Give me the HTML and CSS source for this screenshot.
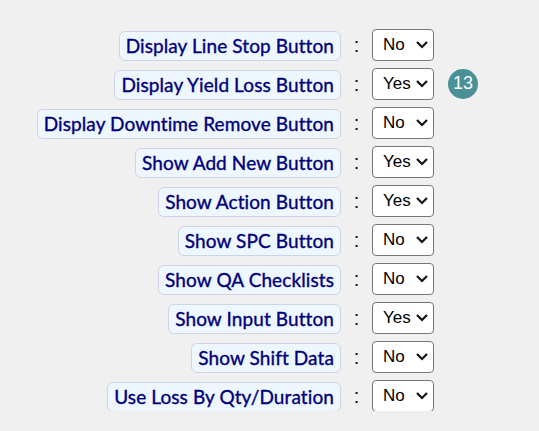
FILE: index.html
```html
<!DOCTYPE html>
<html>
<head>
<meta charset="utf-8">
<link rel="stylesheet" href="styles.css">
</head>
<body>
<div class="settings">
  <div class="row"><div class="label-cell"><span class="label">Display Line Stop Button</span></div><div class="colon">:</div><div class="sel"><select><option>No</option><option>Yes</option></select><svg class="chev" viewBox="0 0 12 7"><path d="M1 1 L6 6 L11 1"/></svg></div></div>
  <div class="row"><div class="label-cell"><span class="label">Display Yield Loss Button</span></div><div class="colon">:</div><div class="sel"><select><option>Yes</option><option>No</option></select><svg class="chev" viewBox="0 0 12 7"><path d="M1 1 L6 6 L11 1"/></svg></div><span class="badge">13</span></div>
  <div class="row"><div class="label-cell"><span class="label">Display Downtime Remove Button</span></div><div class="colon">:</div><div class="sel"><select><option>No</option><option>Yes</option></select><svg class="chev" viewBox="0 0 12 7"><path d="M1 1 L6 6 L11 1"/></svg></div></div>
  <div class="row"><div class="label-cell"><span class="label">Show Add New Button</span></div><div class="colon">:</div><div class="sel"><select><option>Yes</option><option>No</option></select><svg class="chev" viewBox="0 0 12 7"><path d="M1 1 L6 6 L11 1"/></svg></div></div>
  <div class="row"><div class="label-cell"><span class="label">Show Action Button</span></div><div class="colon">:</div><div class="sel"><select><option>Yes</option><option>No</option></select><svg class="chev" viewBox="0 0 12 7"><path d="M1 1 L6 6 L11 1"/></svg></div></div>
  <div class="row"><div class="label-cell"><span class="label">Show SPC Button</span></div><div class="colon">:</div><div class="sel"><select><option>No</option><option>Yes</option></select><svg class="chev" viewBox="0 0 12 7"><path d="M1 1 L6 6 L11 1"/></svg></div></div>
  <div class="row"><div class="label-cell"><span class="label">Show QA Checklists</span></div><div class="colon">:</div><div class="sel"><select><option>No</option><option>Yes</option></select><svg class="chev" viewBox="0 0 12 7"><path d="M1 1 L6 6 L11 1"/></svg></div></div>
  <div class="row"><div class="label-cell"><span class="label">Show Input Button</span></div><div class="colon">:</div><div class="sel"><select><option>Yes</option><option>No</option></select><svg class="chev" viewBox="0 0 12 7"><path d="M1 1 L6 6 L11 1"/></svg></div></div>
  <div class="row"><div class="label-cell"><span class="label">Show Shift Data</span></div><div class="colon">:</div><div class="sel"><select><option>No</option><option>Yes</option></select><svg class="chev" viewBox="0 0 12 7"><path d="M1 1 L6 6 L11 1"/></svg></div></div>
  <div class="row"><div class="label-cell"><span class="label">Use Loss By Qty/Duration</span></div><div class="colon">:</div><div class="sel"><select><option>No</option><option>Yes</option></select><svg class="chev" viewBox="0 0 12 7"><path d="M1 1 L6 6 L11 1"/></svg></div></div>
</div>
</body>
</html>
```
FILE: styles.css
```css
html, body {
  margin: 0;
  padding: 0;
  background: #f0f0f0;
}
.settings {
  padding-top: 29px;
  display: flex;
  flex-direction: column;
  gap: 8px;
}
.row {
  display: flex;
  align-items: center;
  height: 31px;
}
.label-cell {
  width: 341px;
  display: flex;
  justify-content: flex-end;
}
.label {
  box-sizing: border-box;
  height: 30px;
  margin-top: 2px;
  padding: 0 6px;
  display: flex;
  align-items: center;
  font-family: Lato, "Noto Sans", sans-serif;
  font-size: 19px;
  letter-spacing: 0.1px;
  -webkit-text-stroke: 0.35px #00007a;
  color: #00007a;
  background: #eef6ff;
  border: 1px solid #cfd3e6;
  border-radius: 6px;
  white-space: nowrap;
}
.colon {
  width: 31px;
  text-align: center;
  font-family: "Liberation Sans", Arial, sans-serif;
  font-size: 20px;
  color: #111;
  margin-top: 1px;
}
.sel {
  position: relative;
  width: 62px;
  height: 32px;
}
.sel select {
  appearance: none;
  -webkit-appearance: none;
  box-sizing: border-box;
  width: 62px;
  height: 32px;
  margin: 0;
  padding: 0 0 0 10px;
  border: 1px solid #767676;
  border-radius: 4px;
  background: #fff;
  font-family: "Liberation Sans", Arial, sans-serif;
  font-size: 17px;
  color: #000;
}
.chev {
  position: absolute;
  left: 44px;
  top: 12px;
  width: 12px;
  height: 7px;
  overflow: visible;
  pointer-events: none;
}
.chev path {
  fill: none;
  stroke: #111;
  stroke-width: 2.2;
}
.badge {
  margin-left: 14px;
  width: 30px;
  height: 30px;
  border-radius: 50%;
  background: #4a9097;
  color: #fff;
  font-family: "Liberation Sans", Arial, sans-serif;
  font-size: 18px;
  display: flex;
  align-items: center;
  justify-content: center;
}
```
